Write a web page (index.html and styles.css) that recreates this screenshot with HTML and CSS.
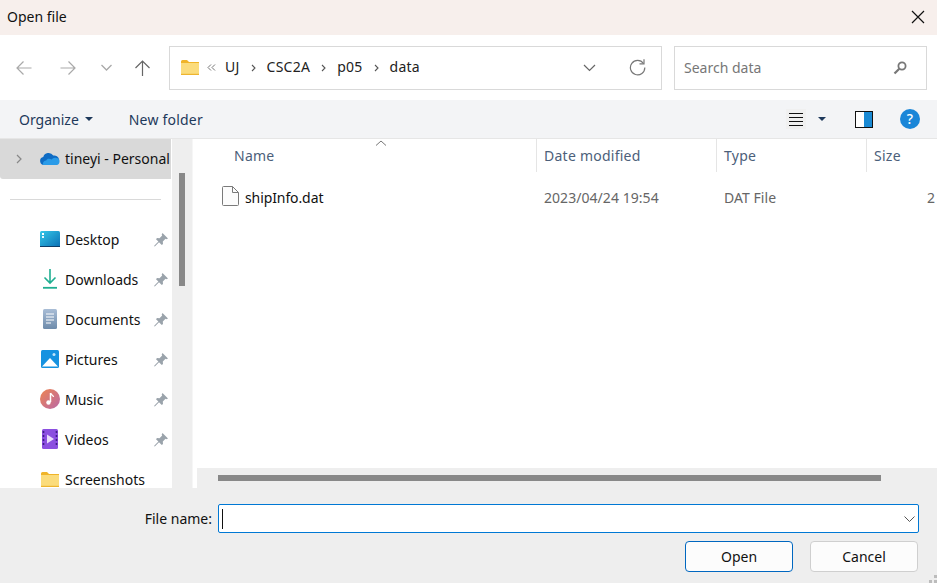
FILE: index.html
```html
<!DOCTYPE html>
<html lang="en">
<head>
<meta charset="utf-8">
<title>Open file</title>
<link rel="stylesheet" href="styles.css">
</head>
<body>
<div class="dialog">
  <header class="titlebar">
    <span class="title">Open file</span>
    <svg class="close" width="14" height="14" viewBox="0 0 14 14"><path d="M1 1l12 12M13 1L1 13" stroke="#111" stroke-width="1.2" fill="none"/></svg>
  </header>

  <div class="navbar">
    <div class="navbtns">
      <svg class="nav-back" width="16" height="14" viewBox="0 0 16 14"><path d="M.5 7h15M7.500 .5L1 7l6.500 6.500" stroke="#a9a9a9" stroke-width="1.2" fill="none"/></svg>
      <svg class="nav-fwd" width="16" height="14" viewBox="0 0 16 14"><path d="M.5 7h15M8.500 .5L15 7l-6.500 6.500" stroke="#a9a9a9" stroke-width="1.2" fill="none"/></svg>
      <svg class="nav-down" width="11" height="7" viewBox="0 0 11 7"><path d="M.5 1l5 5 5-5" stroke="#a9a9a9" stroke-width="1.3" fill="none"/></svg>
      <svg class="nav-up" width="15" height="16" viewBox="0 0 15 16"><path d="M7.500 16V1M.5 8l7-7 7 7" stroke="#666" stroke-width="1.2" fill="none"/></svg>
    </div>
    <div class="address">
      <svg class="addr-folder" width="18" height="15" viewBox="0 0 18 15"><path d="M0 1.500Q0 0 1.500 0H6l2 2h10v3H0z" fill="#f0b429"/><rect y="3" width="18" height="12" fill="#fbdc7c"/><rect y="13.800" width="18" height="1.200" fill="#eeb52f"/></svg>
      <svg class="crumb-more" width="9" height="7" viewBox="0 0 9 7"><path d="M4 .5L1 3.500l3 3M8 .5L5 3.500l3 3" stroke="#777" stroke-width="1" fill="none"/></svg>
      <span class="crumb crumb-uj">UJ</span>
      <svg class="sep" width="5" height="8" viewBox="0 0 5 8"><path d="M1 1l3 3-3 3" stroke="#555" stroke-width="1.1" fill="none"/></svg>
      <span class="crumb">CSC2A</span>
      <svg class="sep" width="5" height="8" viewBox="0 0 5 8"><path d="M1 1l3 3-3 3" stroke="#555" stroke-width="1.1" fill="none"/></svg>
      <span class="crumb">p05</span>
      <svg class="sep" width="5" height="8" viewBox="0 0 5 8"><path d="M1 1l3 3-3 3" stroke="#555" stroke-width="1.1" fill="none"/></svg>
      <span class="crumb">data</span>
      <svg class="addr-chev" width="13" height="8" viewBox="0 0 13 8"><path d="M1 1l5.500 5.500L12 1" stroke="#666" stroke-width="1.2" fill="none"/></svg>
      <svg class="addr-refresh" width="17" height="17" viewBox="0 0 17 17"><path d="M14.500 4.500A7.200 7.200 0 1 0 15.800 8.500" stroke="#777" stroke-width="1.2" fill="none"/><path d="M10.500 4.800h4.500V.3" stroke="#777" stroke-width="1.200" fill="none"/></svg>
    </div>
    <div class="search">
      <span class="search-text">Search data</span>
      <svg width="14" height="14" viewBox="0 0 14 14"><circle cx="9" cy="5" r="3.600" stroke="#777" stroke-width="1.800" fill="none"/><path d="M6.300 7.700L1.500 12.500" stroke="#777" stroke-width="2.200"/></svg>
    </div>
  </div>

  <div class="toolbar">
    <span class="tool">Organize</span>
    <span class="caret caret-org"></span>
    <span class="tool tool-new">New folder</span>
    <span class="toolbar-gap"></span>
    <span class="view-btn">
      <svg width="14" height="13" viewBox="0 0 14 13"><path d="M0 .5h14M0 4.500h14M0 8.500h14M0 12.500h14" stroke="#111" stroke-width="1"/></svg>
    </span>
    <span class="caret caret-view"></span>
    <svg class="pane-icon" width="18" height="17" viewBox="0 0 18 17"><rect x=".5" y=".5" width="17" height="16" fill="#fff" stroke="#111"/><rect x="9" y="1" width="8" height="15" fill="#1a8ad4"/></svg>
    <span class="help">?</span>
  </div>

  <div class="main">
    <aside class="sidebar">
      <div class="tree-cloud">
        <svg class="tree-arrow" width="6" height="10" viewBox="0 0 6 10"><path d="M1 1l4 4-4 4" stroke="#888" stroke-width="1.200" fill="none"/></svg>
        <svg class="cloud" width="20" height="13" viewBox="1 0 19.500 13"><path d="M5 13a4 4 0 0 1-1-7.900A5.500 5.500 0 0 1 14 3.500 4.500 4.500 0 0 1 16 13z" fill="#0f6cc4"/><path d="M4 13h12.500a3.500 3.500 0 0 0 .5-7c-2-.7-3.500.2-4.500 1.500C10 6 7.500 6.500 7 8.500 4.500 8.500 3 11 4 13z" fill="#2a9be8"/></svg>
        <span class="nav-label">tineyi - Personal</span>
      </div>
      <div class="tree-sep"></div>
      <ul class="quick">
        <li class="quick-item">
          <svg class="q-icon" width="20" height="16" viewBox="0 0 20 16"><defs><linearGradient id="dk" x1="0" y1="0" x2="1" y2="1"><stop offset="0" stop-color="#35c8e8"/><stop offset="1" stop-color="#0a6fb5"/></linearGradient></defs><rect width="20" height="16" rx="1.500" fill="url(#dk)"/><rect y="15" width="20" height="1" fill="#0d3c66"/><rect x="2" y="2" width="2" height="2" fill="#fff"/><rect x="2" y="5" width="2" height="2" fill="#e5f7fc"/></svg>
          <span class="nav-label">Desktop</span>
          <svg class="pin" width="14" height="14" viewBox="0 0 14 14"><path d="M8.500 0L14 5.500l-1.500.8-1-.5L8.800 8.500l.2 2.500-1.200 1L5 9.200.8 13.600 0 13l4.400-4.400L2 6.200l1-1.200 2.500.2 2.700-2.700-.5-1z" fill="#9aa3ab"/></svg>
        </li>
        <li class="quick-item">
          <svg class="q-icon" width="14" height="20" viewBox="3 0 14 20"><path d="M10 0v14M4.500 8.500l5.500 5.500 5.500-5.500" stroke="#1fae91" stroke-width="1.600" fill="none"/><path d="M3 18.800h14" stroke="#1fae91" stroke-width="1.800"/></svg>
          <span class="nav-label">Downloads</span>
          <svg class="pin" width="14" height="14" viewBox="0 0 14 14"><path d="M8.500 0L14 5.500l-1.500.8-1-.5L8.800 8.500l.2 2.500-1.200 1L5 9.200.8 13.600 0 13l4.400-4.400L2 6.200l1-1.200 2.500.2 2.700-2.700-.5-1z" fill="#9aa3ab"/></svg>
        </li>
        <li class="quick-item">
          <svg class="q-icon" width="14" height="20" viewBox="3 0 14 20"><defs><linearGradient id="doc" x1="0" y1="0" x2="0" y2="1"><stop offset="0" stop-color="#a9bdd6"/><stop offset="1" stop-color="#6e8bab"/></linearGradient></defs><rect x="3" y="0" width="14" height="20" rx="1.500" fill="url(#doc)"/><path d="M6 5h8M6 8h8M6 11h8M6 14h5" stroke="#fff" stroke-width="1"/></svg>
          <span class="nav-label">Documents</span>
          <svg class="pin" width="14" height="14" viewBox="0 0 14 14"><path d="M8.500 0L14 5.500l-1.500.8-1-.5L8.800 8.500l.2 2.500-1.200 1L5 9.200.8 13.600 0 13l4.400-4.400L2 6.200l1-1.200 2.500.2 2.700-2.700-.5-1z" fill="#9aa3ab"/></svg>
        </li>
        <li class="quick-item">
          <svg class="q-icon" width="18" height="18" viewBox="0 0 18 18"><rect width="18" height="18" rx="1.500" fill="#1592e0"/><path d="M1 16.500L9 8l8 8.500z" fill="#fff"/><circle cx="13" cy="4.500" r="1.500" fill="#bfe4fa"/></svg>
          <span class="nav-label">Pictures</span>
          <svg class="pin" width="14" height="14" viewBox="0 0 14 14"><path d="M8.500 0L14 5.500l-1.500.8-1-.5L8.800 8.500l.2 2.500-1.200 1L5 9.200.8 13.600 0 13l4.400-4.400L2 6.200l1-1.200 2.500.2 2.700-2.700-.5-1z" fill="#9aa3ab"/></svg>
        </li>
        <li class="quick-item">
          <svg class="q-icon" width="20" height="20" viewBox="0 0 20 20"><defs><linearGradient id="mu" x1="0" y1="0" x2="1" y2="1"><stop offset="0" stop-color="#ee8550"/><stop offset="1" stop-color="#b968a8"/></linearGradient></defs><circle cx="10" cy="10" r="10" fill="url(#mu)"/><path d="M10.500 4v9" stroke="#fff" stroke-width="1.500"/><path d="M10.500 4c.5 2 3 2 3 4" stroke="#fff" stroke-width="1.300" fill="none"/><circle cx="8.500" cy="13.500" r="2.200" fill="#fff"/></svg>
          <span class="nav-label">Music</span>
          <svg class="pin" width="14" height="14" viewBox="0 0 14 14"><path d="M8.500 0L14 5.500l-1.500.8-1-.5L8.800 8.500l.2 2.500-1.200 1L5 9.200.8 13.600 0 13l4.400-4.400L2 6.200l1-1.200 2.500.2 2.700-2.700-.5-1z" fill="#9aa3ab"/></svg>
        </li>
        <li class="quick-item">
          <svg class="q-icon" width="16" height="20" viewBox="0 0 16 20"><rect width="16" height="20" rx="1.500" fill="#8b4fe0"/><path d="M1.500 2v2M1.500 6v2M1.500 10v2M1.500 14v2M14.500 2v2M14.500 6v2M14.500 10v2M14.500 14v2" stroke="#3f1d87" stroke-width="1.600"/><path d="M5 5.500l7 4.500-7 4.500z" fill="#e9dcfb"/></svg>
          <span class="nav-label">Videos</span>
          <svg class="pin" width="14" height="14" viewBox="0 0 14 14"><path d="M8.500 0L14 5.500l-1.500.8-1-.5L8.800 8.500l.2 2.500-1.200 1L5 9.200.8 13.600 0 13l4.400-4.400L2 6.200l1-1.200 2.500.2 2.700-2.700-.5-1z" fill="#9aa3ab"/></svg>
        </li>
        <li class="quick-item">
          <svg class="q-icon" width="18" height="15" viewBox="0 0 18 15"><path d="M0 1.500Q0 0 1.500 0H6l2 2h10v3H0z" fill="#f0b429"/><rect y="3" width="18" height="12" fill="#fbdc7c"/><rect y="13.800" width="18" height="1.200" fill="#eeb52f"/></svg>
          <span class="nav-label">Screenshots</span>
        </li>
      </ul>
    </aside>
    <div class="side-scroll"><span class="side-thumb"></span></div>
    <div class="side-gap"></div>

    <section class="files">
      <div class="file-pane">
        <div class="list-head">
          <span class="col col-name">Name<svg class="sort" width="12" height="6" viewBox="0 0 12 6"><path d="M1 5.500L6 1l5 4.500" stroke="#777" stroke-width="1" fill="none"/></svg></span>
          <span class="col">Date modified</span>
          <span class="col">Type</span>
          <span class="col">Size</span>
        </div>
        <div class="list-row">
          <span class="cell-name">
            <svg class="file-icon" width="17" height="20" viewBox="0 0 17 20"><path d="M.5 1.500a1 1 0 0 1 1-1h9l6 6v12a1 1 0 0 1-1 1h-14a1 1 0 0 1-1-1z" fill="#fcfcfc" stroke="#7a7a7a"/><path d="M10.500 .5v6h6" fill="none" stroke="#7a7a7a"/></svg>
            <span class="file-name">shipInfo.dat</span>
          </span>
          <span class="cell">2023/04/24 19:54</span>
          <span class="cell">DAT File</span>
          <span class="cell cell-size">2 KB</span>
        </div>
      </div>
      <div class="hscroll"><span class="hthumb"></span></div>
    </section>
  </div>

  <footer class="bottom">
    <div class="name-row">
      <label class="name-label">File name:</label>
      <div class="name-input">
        <span class="cursor"></span>
        <svg class="combo-chev" width="11" height="6" viewBox="0 0 11 6"><path d="M.5.5l5 5 5-5" stroke="#555" stroke-width="1" fill="none"/></svg>
      </div>
    </div>
    <div class="btn-row">
      <button class="btn btn-primary">Open</button>
      <button class="btn">Cancel</button>
    </div>
    <svg class="grip" width="8" height="8" viewBox="0 0 8 8"><path d="M5 0h3v3H5zM0 5h3v3H0zM5 5h3v3H5z" fill="#bcbcbc"/></svg>
  </footer>
</div>
</body>
</html>
```
FILE: styles.css
```css
* { box-sizing: border-box; }
html, body { margin: 0; padding: 0; }
body {
  width: 937px;
  height: 583px;
  overflow: hidden;
  background: #fff;
  font-family: "Noto Sans", "Open Sans", sans-serif;
  font-size: 14px;
  color: #1a1a1a;
}
.dialog { position: relative; width: 937px; height: 583px; display: flex; flex-direction: column; overflow: hidden; }

.titlebar { height: 35px; flex: none; background: #f7efec; display: flex; align-items: center; justify-content: space-between; padding: 0 12px 2px 7px; }
.title { font-size: 14px; color: #111; }

.navbar { height: 65px; flex: none; display: flex; align-items: center; padding: 0 10px 0 16px; background: #fff; }
.navbtns { width: 153px; display: flex; align-items: center; flex: none; }
.nav-fwd { margin-left: 28px; }
.nav-down { margin-left: 25px; margin-bottom: 1px; }
.nav-up { margin-left: 23px; }
.address { width: 493px; height: 44px; flex: none; border: 1px solid #d9d9d9; display: flex; align-items: center; padding-left: 11px; }
.crumb { color: #222; margin-bottom: 2px; letter-spacing: .25px; }
.crumb-more { margin-left: 8px; }
.crumb-uj { margin-left: 9px; }
.sep { margin: 1px 11px 0 11px; flex: none; }
.addr-chev { margin-left: auto; }
.addr-refresh { margin: 0 15px 0 33px; }
.search { width: 253px; height: 44px; flex: none; margin-left: 12px; border: 1px solid #d9d9d9; display: flex; align-items: center; justify-content: space-between; padding: 0 19px 0 9px; }
.search-text { color: #777; margin-bottom: 1px; }

.toolbar { height: 39px; flex: none; background: #f3f4f6; border-bottom: 1px solid #e6e6e6; display: flex; align-items: center; padding: 0 17px 0 19px; color: #1e395b; }
.tool { color: #1e395b; }
.tool-new { margin-left: 36px; letter-spacing: .2px; }
.caret { width: 0; height: 0; border-left: 4px solid transparent; border-right: 4px solid transparent; border-top: 4px solid #1e395b; }
.caret-org { margin-left: 6px; }
.toolbar-gap { flex: 1; }
.view-btn { width: 20px; height: 20px; background: #f0f0f0; display: flex; align-items: center; justify-content: center; }
.caret-view { margin-left: 12px; }
.pane-icon { margin-left: 29px; }
.help { width: 20px; height: 20px; margin-left: 27px; border-radius: 50%; background: #1a86d8; color: #fff; font-size: 14px; font-weight: 500; text-align: center; line-height: 20px; }

.main { height: 349px; flex: none; display: flex; }
.sidebar { width: 172px; flex: none; overflow: hidden; background: #fff; }
.tree-cloud { height: 40px; width: 171px; background: #d9d9d9; display: flex; align-items: center; padding-left: 16px; border-radius: 0 0 0 3px; white-space: nowrap; overflow: hidden; }
.tree-arrow { margin-right: 18px; flex: none; }
.cloud { flex: none; margin-bottom: 1px; }
.nav-label { color: #111; margin-left: 5px; white-space: nowrap; }
.tree-cloud .nav-label { margin-bottom: 1px; }
.tree-sep { height: 1px; background: #d9d9d9; margin: 20px 11px 0 10px; }
.quick { list-style: none; margin: 19px 0 0; padding: 0; }
.quick-item { height: 40px; display: grid; grid-template-columns: 20px 1fr; align-items: center; position: relative; padding-left: 40px; }
.q-icon { justify-self: center; }
.pin { position: absolute; left: 154px; top: 14px; }
.side-scroll { width: 20px; flex: none; background: #eee; padding: 34px 7px 0; }
.side-thumb { display: block; width: 6px; height: 113px; background: #888; }
.side-gap { width: 1px; flex: none; background: #f6f6f6; }

.files { flex: 1; min-width: 0; display: flex; flex-direction: column; overflow: hidden; }
.file-pane { flex: 1; overflow: hidden; }
.list-head, .list-row { display: grid; grid-template-columns: 343px 180px 150px 100px; width: 773px; }
.list-head { height: 32px; }
.col { color: #4c607a; padding-left: 7px; border-left: 1px solid #e5e5e5; line-height: 33px; position: relative; letter-spacing: .25px; }
.col-name { padding-left: 41px; border-left: 0; }
.sort { position: absolute; left: 182px; top: 1px; }
.list-row { height: 38px; margin-top: 7px; align-items: center; }
.cell-name { display: flex; align-items: center; padding-left: 29px; gap: 6px; }
.file-icon { margin-bottom: 2px; }
.file-name { color: #111; letter-spacing: -.1px; }
.cell { color: #666; padding-left: 8px; letter-spacing: .05px; }
.cell-size { padding-left: 61px; white-space: nowrap; }
.hscroll { height: 20px; flex: none; margin-left: 4px; background: #eee; padding: 7px 0 0 21px; }
.hthumb { display: block; width: 663px; height: 6px; background: #888; }

.bottom { flex: 1; background: #eee; position: relative; padding: 16px 18px 0 0; }
.name-row { display: flex; justify-content: flex-end; align-items: center; gap: 6px; }
.name-label { color: #111; }
.name-input { width: 701px; height: 29px; background: #fff; border: 1px solid #0078d4; border-radius: 2px; display: flex; align-items: center; justify-content: space-between; padding: 0 3px 0 3px; }
.cursor { width: 1px; height: 20px; background: #111; }
.btn-row { display: flex; justify-content: flex-end; gap: 17px; margin-top: 8px; padding-right: 1px; }
.btn { width: 108px; height: 31px; background: #fcfcfc; border: 1px solid #cfcfcf; border-radius: 4px; font: inherit; color: #111; padding: 0; }
.btn-primary { border-color: #0067c0; }
.grip { position: absolute; right: 0; bottom: 0; }
```
